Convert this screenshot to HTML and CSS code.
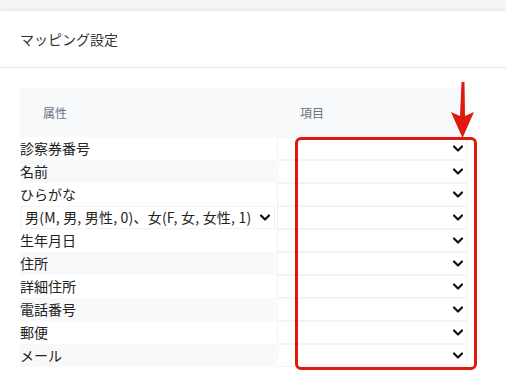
FILE: index.html
```html
<!DOCTYPE html>
<html lang="ja">
<head>
<meta charset="utf-8">
<link rel="stylesheet" href="styles.css">
</head>
<body>
<div class="card">
  <div class="card-header">マッピング設定</div>
  <div class="card-body">
    <div class="table">
      <div class="thead">
        <div class="th th-attr">属性</div>
        <div class="th th-item">項目</div>
      </div>
      <div class="row"><div class="cell-attr">診察券番号</div><div class="cell-item"><div class="select"><span></span><svg class="chev" viewBox="0 0 10 6"><path d="M1 1l4 4 4-4"/></svg></div></div></div>
      <div class="row"><div class="cell-attr">名前</div><div class="cell-item"><div class="select"><span></span><svg class="chev" viewBox="0 0 10 6"><path d="M1 1l4 4 4-4"/></svg></div></div></div>
      <div class="row"><div class="cell-attr">ひらがな</div><div class="cell-item"><div class="select"><span></span><svg class="chev" viewBox="0 0 10 6"><path d="M1 1l4 4 4-4"/></svg></div></div></div>
      <div class="row"><div class="cell-attr"><div class="select select-inline"><span>男(M, 男, 男性, 0)、女(F, 女, 女性, 1)</span><svg class="chev" viewBox="0 0 10 6"><path d="M1 1l4 4 4-4"/></svg></div></div><div class="cell-item"><div class="select"><span></span><svg class="chev" viewBox="0 0 10 6"><path d="M1 1l4 4 4-4"/></svg></div></div></div>
      <div class="row"><div class="cell-attr">生年月日</div><div class="cell-item"><div class="select"><span></span><svg class="chev" viewBox="0 0 10 6"><path d="M1 1l4 4 4-4"/></svg></div></div></div>
      <div class="row"><div class="cell-attr">住所</div><div class="cell-item"><div class="select"><span></span><svg class="chev" viewBox="0 0 10 6"><path d="M1 1l4 4 4-4"/></svg></div></div></div>
      <div class="row"><div class="cell-attr">詳細住所</div><div class="cell-item"><div class="select"><span></span><svg class="chev" viewBox="0 0 10 6"><path d="M1 1l4 4 4-4"/></svg></div></div></div>
      <div class="row"><div class="cell-attr">電話番号</div><div class="cell-item"><div class="select"><span></span><svg class="chev" viewBox="0 0 10 6"><path d="M1 1l4 4 4-4"/></svg></div></div></div>
      <div class="row"><div class="cell-attr">郵便</div><div class="cell-item"><div class="select"><span></span><svg class="chev" viewBox="0 0 10 6"><path d="M1 1l4 4 4-4"/></svg></div></div></div>
      <div class="row"><div class="cell-attr">メール</div><div class="cell-item"><div class="select"><span></span><svg class="chev" viewBox="0 0 10 6"><path d="M1 1l4 4 4-4"/></svg></div></div></div>
    </div>
    <div class="highlight"></div>
    <svg class="arrow" viewBox="0 0 24 56"><path d="M10.5 0h3l0.5 34l9 -4l-11.5 26l-11.5 -26l9 4z"/></svg>
  </div>
</div>
</body>
</html>
```

FILE: styles.css
```css
html, body {
  margin: 0;
  padding: 0;
}
body {
  background: #f6f6f6;
  font-family: "Noto Sans CJK JP", "Noto Sans", sans-serif;
  color: #222;
  width: 506px;
  height: 387px;
  overflow: hidden;
}
.card {
  margin-top: 10px;
  background: #fff;
  box-shadow: 0 -1px 3px rgba(0,0,0,0.07);
  border-top: 1px solid #ececec;
  height: 377px;
}
.card-header {
  height: 57px;
  display: flex;
  align-items: center;
  padding: 0 20px;
  font-size: 14px;
  color: #333;
  border-bottom: 1px solid #e6e6e6;
  box-sizing: border-box;
}
.card-body {
  position: relative;
  padding: 20px 39px 0 20px;
}
.table {
  width: 447px;
}
.thead {
  display: flex;
  height: 49px;
  align-items: center;
  background: #f8f9fb;
  font-size: 12px;
  color: #6b7280;
}
.th-attr {
  width: 257px;
  padding-left: 23px;
  box-sizing: content-box;
  flex: none;
}
.row {
  display: flex;
  height: 23px;
  align-items: center;
  font-size: 14px;
}
.row:nth-child(odd) .cell-attr {
  background: #f8f9fb;
}
.cell-attr {
  width: 256px;
  height: 23px;
  display: flex;
  align-items: center;
  flex: none;
  line-height: 23px;
}
.cell-item {
  flex: 1;
  height: 23px;
  display: flex;
  padding-left: 1px;
}
.select {
  flex: 1;
  display: flex;
  align-items: center;
  justify-content: space-between;
  background: #fff;
  border: 1px solid #f2f3f5;
  box-sizing: border-box;
  height: 23px;
  padding: 0 3px 0 3px;
}
.select-inline {
  flex: none;
  width: 254px;
  margin-left: 1px;
  padding: 0 4px 0 3px;
  font-size: 14px;
  letter-spacing: 0.2px;
  color: #222;
}
.chev {
  width: 10px;
  height: 7px;
  fill: none;
  stroke: #111;
  stroke-width: 2.2;
  stroke-linecap: round;
  stroke-linejoin: round;
}
.highlight {
  position: absolute;
  left: 295px;
  top: 69px;
  width: 182px;
  height: 233px;
  border: 3px solid #e0190f;
  border-radius: 6px;
  box-sizing: border-box;
}
.arrow {
  position: absolute;
  left: 451px;
  top: 14px;
  width: 24px;
  height: 56px;
  fill: #e0190f;
}
```
